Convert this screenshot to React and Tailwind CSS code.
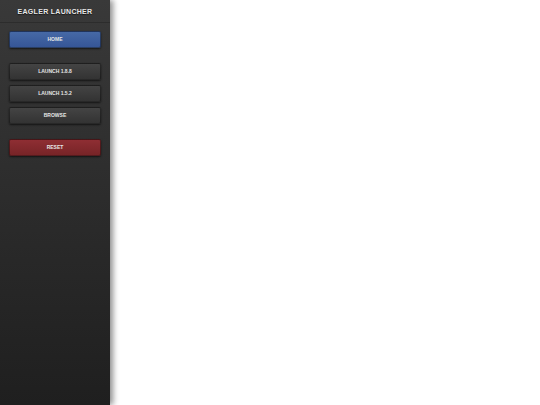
export default function App() {
  const btn =
    "w-[92px] h-[17px] flex items-center justify-center rounded-[2px] text-[5px] font-bold text-[#e6e6e6] shadow-[0_1px_2px_rgba(0,0,0,0.6)] border border-black/40";
  return (
    <div
      className="w-[540px] h-[405px] bg-white flex"
      style={{ fontFamily: '"Liberation Sans", Arial, sans-serif' }}
    >
      <div className="w-[110px] h-full bg-gradient-to-b from-[#393939] to-[#1f1f1f] shadow-[3px_0_6px_rgba(0,0,0,0.45)] flex flex-col relative z-10">
        <div className="h-[23px] pt-[2px] flex items-center justify-center border-b border-[#2c2c2c] text-[7px] font-bold tracking-[0.3px] text-[#e8e8e8] [text-shadow:0_1px_1px_rgba(0,0,0,0.6)]">
          EAGLER LAUNCHER
        </div>
        <div className="flex flex-col pl-[9px] pt-[8px]">
          <div className={`${btn} bg-gradient-to-b from-[#4669a6] to-[#365697]`}>HOME</div>
          <div className="h-[15px]" />
          <div className="flex flex-col gap-[5px]">
            <div className={`${btn} bg-gradient-to-b from-[#444444] to-[#333333]`}>LAUNCH 1.8.8</div>
            <div className={`${btn} bg-gradient-to-b from-[#444444] to-[#333333]`}>LAUNCH 1.5.2</div>
            <div className={`${btn} bg-gradient-to-b from-[#444444] to-[#333333]`}>BROWSE</div>
          </div>
          <div className="h-[15px]" />
          <div className={`${btn} bg-gradient-to-b from-[#8f2e33] to-[#772427]`}>RESET</div>
        </div>
      </div>
      <div className="flex-1" />
    </div>
  );
}
